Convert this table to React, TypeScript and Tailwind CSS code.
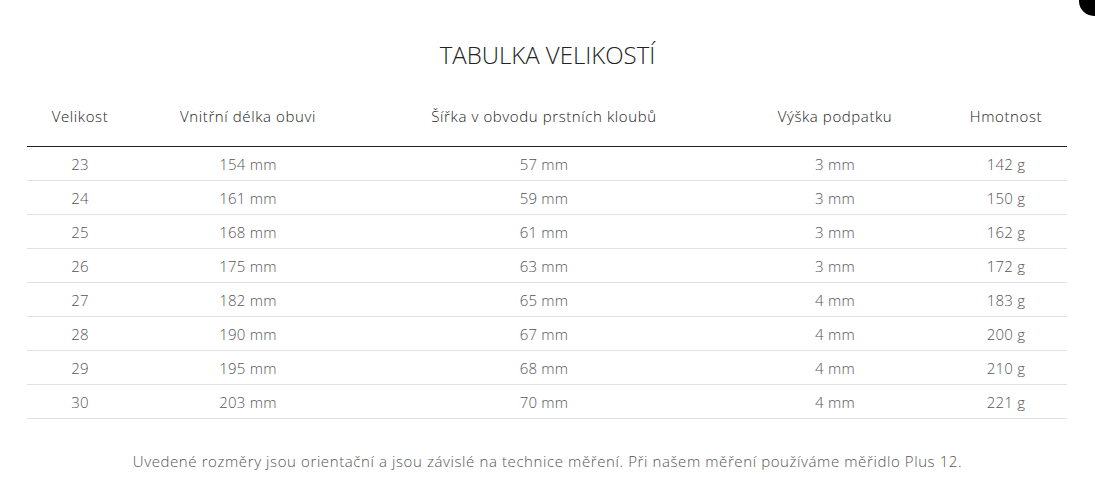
import React from "react";

const rows = [
  ["23", "154 mm", "57 mm", "3 mm", "142 g"],
  ["24", "161 mm", "59 mm", "3 mm", "150 g"],
  ["25", "168 mm", "61 mm", "3 mm", "162 g"],
  ["26", "175 mm", "63 mm", "3 mm", "172 g"],
  ["27", "182 mm", "65 mm", "4 mm", "183 g"],
  ["28", "190 mm", "67 mm", "4 mm", "200 g"],
  ["29", "195 mm", "68 mm", "4 mm", "210 g"],
  ["30", "203 mm", "70 mm", "4 mm", "221 g"],
];

const headers = ["Velikost", "Vnitřní délka obuvi", "Šířka v obvodu prstních kloubů", "Výška podpatku", "Hmotnost"];
const widths = ["w-[106px]", "w-[230px]", "w-[362px]", "w-[220px]", "w-[122px]"];

export default function App() {
  return (
    <div className="relative w-[1095px] h-[488px] bg-white overflow-hidden" style={{ fontFamily: "'Open Sans', Lato, sans-serif" }}>
      <div className="absolute -top-[14px] -right-[14px] w-[30px] h-[30px] rounded-full bg-black" />
      <div className="px-[27px] pt-[38px]">
        <h1 className="text-center text-[24px] font-light text-[#222] tracking-[0px] leading-[34px]">TABULKA VELIKOSTÍ</h1>
        <table className="mt-[27px] w-[1040px] table-fixed border-collapse">
          <thead>
            <tr className="border-b border-[#222]">
              {headers.map((h, i) => (
                <th key={i} className={`${widths[i]} h-[47px] pb-[12px] text-center text-[15px] font-light text-[#222] tracking-[0.6px] align-middle`}>{h}</th>
              ))}
            </tr>
          </thead>
          <tbody>
            {rows.map((r, ri) => (
              <tr key={ri} className="border-b border-[#e0e0e0]">
                {r.map((c, ci) => (
                  <td key={ci} className="h-[34px] pt-[2px] text-center text-[15px] font-light text-[#555] tracking-[0.2px] align-middle">{c}</td>
                ))}
              </tr>
            ))}
          </tbody>
        </table>
        <p className="mt-[31px] text-center text-[15px] font-light text-[#555] tracking-[0.6px]">
          Uvedené rozměry jsou orientační a jsou závislé na technice měření. Při našem měření používáme měřidlo Plus 12.
        </p>
      </div>
    </div>
  );
}
